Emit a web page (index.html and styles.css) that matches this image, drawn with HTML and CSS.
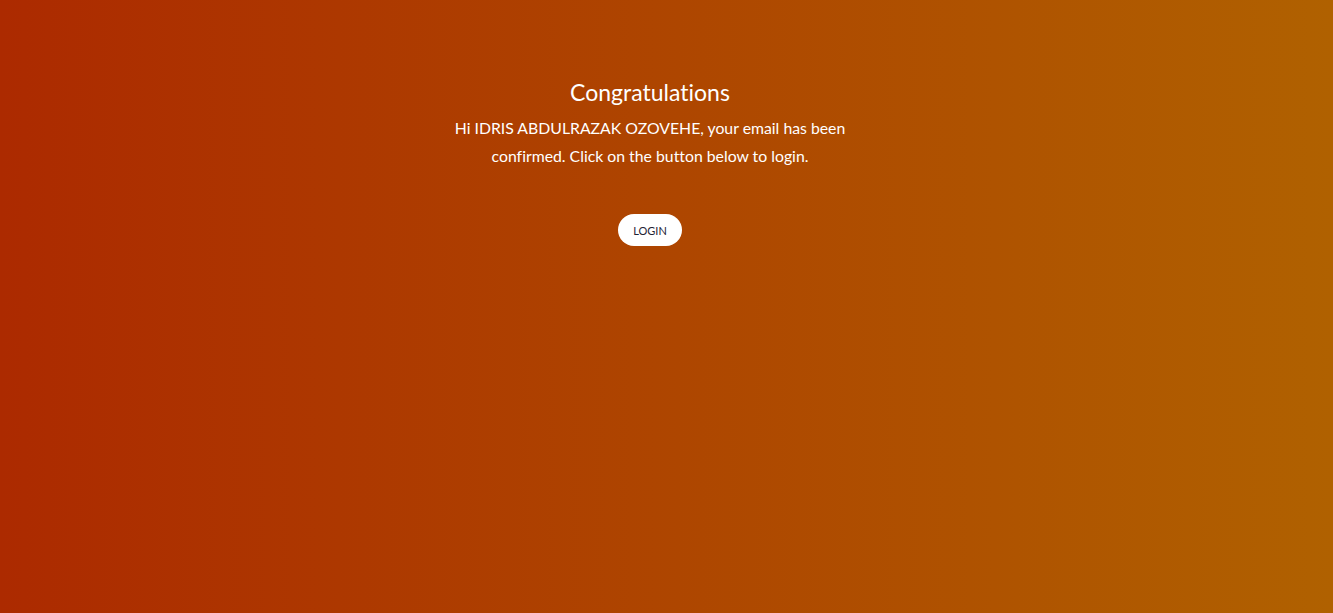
FILE: index.html
```html
<!DOCTYPE html>
<html>
<head>
<meta charset="utf-8">
<link rel="stylesheet" href="styles.css">
</head>
<body>
<div class="page">
  <div class="card">
    <h1 class="title">Congratulations</h1>
    <p class="message">Hi IDRIS ABDULRAZAK OZOVEHE, your email has been confirmed. Click on the button below to login.</p>
    <a class="btn" href="#">LOGIN</a>
  </div>
</div>
</body>
</html>
```
FILE: styles.css
```css
html, body {
  margin: 0;
  padding: 0;
  height: 100%;
}
body {
  font-family: Lato, "Open Sans", sans-serif;
  font-variant-ligatures: none;
  background: linear-gradient(to right, #ac2a00, #b06100);
  color: #fff;
}
.page {
  min-height: 100%;
  display: flex;
  justify-content: center;
  padding-right: 33px;
  box-sizing: border-box;
}
.card {
  width: 410px;
  display: flex;
  flex-direction: column;
  align-items: center;
  text-align: center;
  padding-top: 78px;
}
.title {
  font-size: 23px;
  font-weight: 400;
  margin: 0;
  line-height: 28px;
}
.message {
  font-size: 15.8px;
  line-height: 28px;
  margin: 8px 0 0 0;
}
.btn {
  margin-top: 44px;
  display: inline-flex;
  align-items: center;
  justify-content: center;
  width: 64px;
  height: 32px;
  border-radius: 16px;
  background: #fff;
  color: #1e2235;
  font-size: 11px;
  text-decoration: none;
}
```
